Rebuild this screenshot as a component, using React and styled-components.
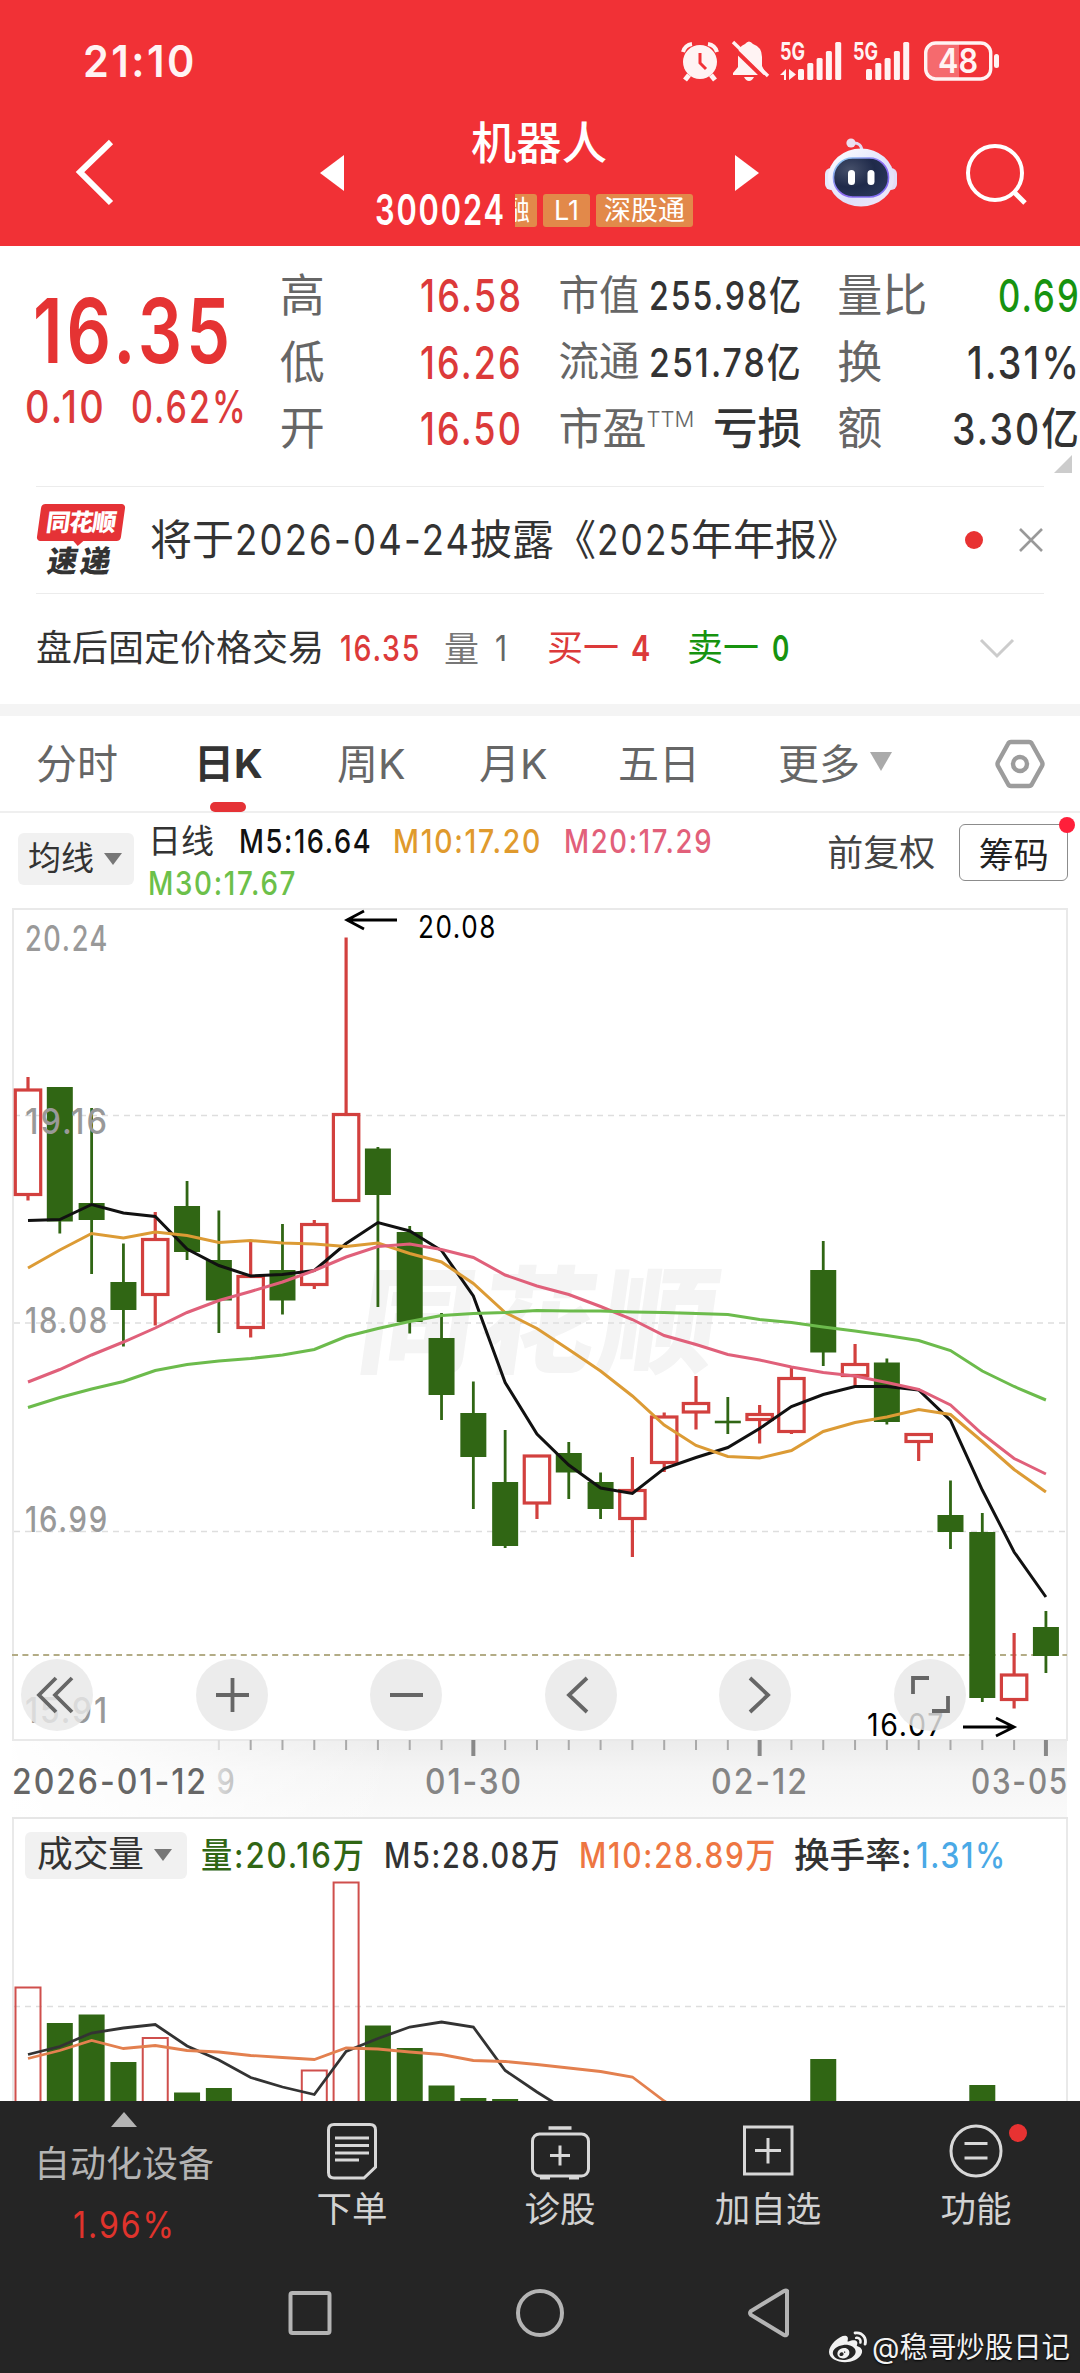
import React, { useLayoutEffect, useRef, useState } from "react";
import styled, { createGlobalStyle } from "styled-components";
import { FaWeibo } from "react-icons/fa";

const GlobalStyle = createGlobalStyle`
  * { box-sizing: border-box; }
  body {
    margin: 0;
    background: #fff;
    font-family: Inter, "Noto Sans CJK SC", sans-serif;
    color: #333;
  }
  svg { display: block; flex: none; overflow: visible; }
`;

const RED = "#dc3a3a";
const GREEN = "#306614";

/* ---------- text squeezed to a fixed width ---------- */

const FitBox = styled.span`
  display: block;
  flex: none;
  width: ${p => p.$w}px;
  margin-left: ${p => p.$left || 0}px;
  font-size: ${p => p.$size}px;
  font-weight: ${p => p.$weight || 400};
  color: ${p => p.$color || "inherit"};
  line-height: 1.2;
  white-space: nowrap;
`;

const FitInner = styled.span`
  display: inline-block;
  transform-origin: left center;
  letter-spacing: ${p => (p.$num ? "0.06em" : 0)};
  margin-left: ${p => (p.$num ? "0.02em" : 0)};
`;

function Fit({ w, size, weight, color, left, children }) {
  const ref = useRef(null);
  const [scale, setScale] = useState(1);

  useLayoutEffect(() => {
    setScale(w / ref.current.offsetWidth);
  }, [w]);

  return (
    <FitBox $w={w} $size={size} $weight={weight} $color={color} $left={left}>
      <FitInner ref={ref} $num={/\d/.test(children)} style={{ transform: `scaleX(${scale})` }}>
        {children}
      </FitInner>
    </FitBox>
  );
}

/* ---------- layout ---------- */

const Page = styled.div`
  position: relative;
  width: 1080px;
  height: 2373px;
  overflow: hidden;
  background: #fff;
`;

const Header = styled.header`
  height: 246px;
  background: #f13136;
  color: #fff;
`;

const StatusBar = styled.div`
  display: flex;
  align-items: center;
  height: 100px;
  padding: 22px 80px 0 82px;
`;

const StatusIcons = styled.div`
  display: flex;
  align-items: center;
  margin-left: auto;
`;

const NavRow = styled.div`
  display: flex;
  align-items: center;
  height: 146px;
  padding-left: 75px;
`;

const TitleBlock = styled.div`
  width: 391px;
  height: 146px;
  padding-top: 20px;
`;

const TitleLine = styled.div`
  display: flex;
  align-items: center;
  height: 48px;
  padding-left: 127px;
`;

const CodeLine = styled.div`
  display: flex;
  align-items: center;
  height: 40px;
  margin-top: 22px;
  padding-left: 30px;
`;

const Tag = styled.span`
  display: flex;
  justify-content: ${p => (p.$clip ? "flex-end" : "center")};
  align-items: center;
  width: ${p => p.$w}px;
  height: 33px;
  margin-left: ${p => p.$left}px;
  padding-right: ${p => (p.$clip ? 7 : 0)}px;
  border-radius: ${p => (p.$clip ? "0 3px 3px 0" : "3px")};
  background: #e2894a;
  font-size: 27px;
  line-height: 33px;
  white-space: nowrap;
  overflow: hidden;
`;

const Gap = styled.span`
  flex: none;
  width: ${p => p.$w}px;
`;

const Quote = styled.section`
  position: relative;
  display: flex;
  height: 240px;
  padding-top: 17px;
`;

const PriceBlock = styled.div`
  width: 280px;
  padding-top: 15px;
`;

const PriceSub = styled.div`
  display: flex;
  margin-top: -5px;
`;

const StatCol = styled.div`
  width: ${p => p.$w}px;
  margin-right: ${p => p.$gap || 0}px;
`;

const Stat = styled.div`
  display: flex;
  align-items: center;
  justify-content: space-between;
  height: 66.5px;
`;

const Name = styled.span`
  display: flex;
  font-size: ${p => p.$size || 45}px;
  line-height: 1.2;
  color: #666;
`;

const Sup = styled.span`
  margin-top: 5px;
  font-size: 22px;
  font-weight: 300;
  line-height: 1;
`;

const Corner = styled.span`
  position: absolute;
  right: 8px;
  bottom: 13px;
  border-left: 18px solid transparent;
  border-bottom: 18px solid #ccc;
`;

const News = styled.section`
  display: flex;
  align-items: center;
  height: 108px;
  margin: 0 36px;
  border-top: 1px solid #ececec;
  border-bottom: 1px solid #ececec;
`;

const Brand = styled.div`
  width: 84px;
  margin: 0 27px 0 3px;
  font-weight: 900;
  line-height: 1;
`;

const BrandTop = styled.div`
  position: relative;
  height: 37px;
  transform: skewX(-8deg);
  border-radius: 4px;
  background: #e53236;
  color: #fff;
  font-size: 24px;
  line-height: 37px;
  text-align: center;
  letter-spacing: -1px;
  &:after {
    content: "";
    position: absolute;
    left: 36px;
    top: 36px;
    border: 6px solid transparent;
    border-top-color: #e53236;
    border-bottom: 0;
  }
`;

const BrandBottom = styled.div`
  margin-top: 4px;
  height: 32px;
  transform: skewX(-10deg);
  font-size: 30px;
  line-height: 32px;
  text-align: center;
  letter-spacing: 3px;
`;

const Dot = styled.span`
  flex: none;
  width: ${p => p.$d}px;
  height: ${p => p.$d}px;
  border-radius: 50%;
  background: ${p => p.$color || "#e83232"};
`;

const AfterHours = styled.section`
  display: flex;
  align-items: center;
  height: 110px;
  padding-left: 36px;
`;

const Band = styled.div`
  height: 12px;
  background: #f4f4f4;
`;

const Tabs = styled.nav`
  display: flex;
  height: 97px;
  padding-left: 36px;
  border-bottom: 2px solid #efefef;
`;

const Tab = styled.div`
  position: relative;
  display: flex;
  align-items: center;
  width: ${p => p.$w}px;
  height: 97px;
  padding-bottom: ${p => (p.$icon ? 2 : 7)}px;
  font-size: ${p => (p.$on ? 40 : 41)}px;
  font-weight: ${p => (p.$on ? 700 : 400)};
  color: ${p => (p.$on ? "#333" : "#666")};
  &:after {
    content: "";
    display: ${p => (p.$on ? "block" : "none")};
    position: absolute;
    left: 16px;
    bottom: 1px;
    width: 36px;
    height: 10px;
    border-radius: 5px;
    background: #e53236;
  }
`;

const Caret = styled.span`
  margin-left: ${p => p.$left || 0}px;
  border: ${p => p.$s}px solid transparent;
  border-top: ${p => p.$h}px solid ${p => p.$color || "#777"};
  border-bottom: 0;
`;

const Legend = styled.div`
  display: flex;
  height: 95px;
  padding: 0 12px 0 18px;
`;

const Pill = styled.div`
  display: flex;
  align-items: center;
  flex: none;
  width: ${p => p.$w}px;
  height: ${p => p.$h}px;
  margin-top: ${p => p.$top || 0}px;
  padding-left: ${p => p.$pad}px;
  border-radius: 6px;
  background: #f1f1f1;
`;

const LegendLines = styled.div`
  width: 695px;
  padding-top: 8px;
`;

const LegendLine = styled.div`
  display: flex;
  align-items: center;
  height: 42px;
`;

const ChipButton = styled.div`
  position: relative;
  display: flex;
  align-items: center;
  justify-content: center;
  width: 109px;
  height: 57px;
  margin: 11px 0 0 24px;
  border: 1.5px solid #8c8c8c;
  border-radius: 6px;
  font-size: 35px;
  color: #222;
  ${Dot} {
    position: absolute;
    top: -8px;
    right: -8px;
  }
`;

const AdjustLabel = styled.span`
  padding-top: 19px;
  line-height: 42px;
  font-size: 36px;
  color: #444;
  white-space: nowrap;
`;

const ChartArea = styled.section`
  position: relative;
  height: 911px;
`;

const Controls = styled.div`
  position: absolute;
  left: 21px;
  top: 751px;
  display: flex;
  gap: 102.5px;
`;

const RoundButton = styled.span`
  display: flex;
  align-items: center;
  justify-content: center;
  width: 72px;
  height: 72px;
  border-radius: 50%;
  background: rgba(232, 232, 232, 0.82);
`;

const VolumeHead = styled.div`
  display: flex;
  align-items: center;
  height: 62px;
  margin: 0 12px;
  padding: 10px 0 0 11px;
  border: 2px solid #e9e9e9;
  border-top: 0;
  border-bottom: 0;
`;

const Bottom = styled.footer`
  height: 272px;
  background: #252525;
`;

const BottomMenu = styled.div`
  display: flex;
  height: 152px;
`;

const Sector = styled.div`
  display: flex;
  flex-direction: column;
  align-items: center;
  width: 248px;
  padding-top: 11px;
  color: #b4b4b4;
`;

const Up = styled.span`
  border: 13px solid transparent;
  border-bottom: 15px solid #b4b4b4;
  border-top: 0;
`;

const SectorName = styled.span`
  margin: 15px 0 17px;
  font-size: 36px;
  line-height: 44px;
`;

const MenuItem = styled.div`
  position: relative;
  display: flex;
  flex-direction: column;
  align-items: center;
  width: 208px;
  padding-top: 20px;
  font-size: 35.5px;
  line-height: 44px;
  color: #d2d2d2;
  svg { margin-bottom: 7px; }
  ${Dot} {
    position: absolute;
    left: 137px;
    top: 23px;
  }
`;

const SystemNav = styled.div`
  display: flex;
  align-items: center;
  justify-content: center;
  gap: 182px;
  height: 120px;
`;

const Watermark = styled.div`
  position: absolute;
  right: 10px;
  bottom: 6px;
  display: flex;
  align-items: center;
  color: #f2f2f2;
  text-shadow: 0 1px 2px #000;
`;

/* ---------- icons ---------- */

const AlarmIcon = () => (
  <svg width="38" height="40" viewBox="0 0 38 40" fill="#fff3f3">
    <circle cx="19" cy="21" r="17" />
    <path d="M2 11 Q4 4 11 3 M27 3 Q34 4 36 11" stroke="#fff3f3" strokeWidth="4" fill="none" />
    <path d="M8 34 l-4 5 M30 34 l4 5" stroke="#fff3f3" strokeWidth="5" />
    <path d="M19 12 V22 L25 28" stroke="#f13136" strokeWidth="3" fill="none" />
  </svg>
);

const BellOffIcon = () => (
  <svg width="38" height="42" viewBox="0 0 38 42" fill="#fff3f3">
    <path d="M14 4 Q18 -1 22 4 Q31 7 31 17 V26 L35 34 V35 H2 V33 L7 27 V14 Q7 7 14 4Z" />
    <path d="M13 37 H23 Q21 41 18 41 Q15 41 13 37Z" />
    <path d="M-1 5 L33 38" stroke="#f13136" strokeWidth="4" />
    <path d="M2 2 L37 36" stroke="#fff3f3" strokeWidth="3.4" />
  </svg>
);

function Signal({ first, data }) {
  const tops = [28, 22, 17, 10, 1];
  return (
    <svg width={first + 44} height="40" viewBox={`0 0 ${first + 44} 40`} fill="#fff3f3">
      <text x="0" y="19" fontSize="24" fontWeight="700" fontFamily="Inter" textLength="25" lengthAdjust="spacingAndGlyphs">5G</text>
      {tops.map((t, i) => (
        <rect key={t} x={first + i * 9.3} y={t} width="6" height={39 - t} rx="1.5" />
      ))}
      {data && <path d="M0 34 L6 28 V39 H4 V34Z M9 28 V39 L16 33.5Z" />}
    </svg>
  );
}

const Battery = () => (
  <svg width="76" height="40" viewBox="0 0 76 40">
    <path d="M3 10 Q3 3 11 3 H35 V37 H11 Q3 37 3 30Z" fill="#fff" opacity=".28" />
    <rect x="1.7" y="2" width="65" height="36" rx="10" fill="none" stroke="#fff3f3" strokeWidth="3.4" />
    <rect x="70" y="13" width="5" height="14" rx="2.5" fill="#fff3f3" />
    <text x="14" y="32" fontSize="34" fontWeight="600" fontFamily="Inter" fill="#fff3f3" textLength="40" lengthAdjust="spacingAndGlyphs">48</text>
  </svg>
);

const RobotIcon = () => (
  <svg width="74" height="70" viewBox="0 0 74 70">
    <defs>
      <linearGradient id="shell" x1="0" y1="0" x2="1" y2="1">
        <stop offset="0" stopColor="#ffffff" />
        <stop offset=".6" stopColor="#dfe0fb" />
        <stop offset="1" stopColor="#f3e9f7" />
      </linearGradient>
      <linearGradient id="rim" x1="0" y1="0" x2="1" y2="1">
        <stop offset="0" stopColor="#8fdcf2" />
        <stop offset=".5" stopColor="#8f6bf2" />
        <stop offset="1" stopColor="#7a6cf0" />
      </linearGradient>
      <radialGradient id="face" cx=".3" cy=".3" r=".9">
        <stop offset="0" stopColor="#46506a" />
        <stop offset=".5" stopColor="#1f2a4a" />
        <stop offset="1" stopColor="#2c3a5c" />
      </radialGradient>
    </defs>
    <path d="M28 5 Q38 4 38 14" fill="none" stroke="#e3daf2" strokeWidth="3" />
    <circle cx="27" cy="5" r="4.6" fill="#ecdff0" />
    <rect x="1" y="30" width="12" height="22" rx="6" fill="#e6e9fb" />
    <rect x="61" y="30" width="12" height="22" rx="6" fill="#e3dcf7" />
    <ellipse cx="37" cy="39.5" rx="33" ry="29" fill="url(#shell)" />
    <rect x="9.5" y="20" width="55" height="39" rx="19" fill="url(#face)" stroke="url(#rim)" strokeWidth="1.6" />
    <rect x="24" y="32" width="7" height="15" rx="3.5" fill="#fff" />
    <rect x="43.500" y="32" width="7" height="15" rx="3.5" fill="#fff" />
  </svg>
);

const stroke = { fill: "none", stroke: "#d8d8d8", strokeWidth: 3 };

const OrderIcon = () => (
  <svg width="52" height="60" viewBox="0 0 52 60" {...stroke}>
    <path d="M8 3.500 H44 Q49.500 3.500 49.500 9 V46 L38 57 H8 Q2.500 57 2.500 51.500 V9 Q2.500 3.500 8 3.500Z" />
    <path d="M9 17 H43 M9 24.500 H43 M9 32 H43 M9 39 H33" />
  </svg>
);

const ToolboxIcon = () => (
  <svg width="60" height="60" viewBox="0 0 60 60" {...stroke}>
    <path d="M18.500 7 H41.500" strokeWidth="3.500" />
    <rect x="2.500" y="13" width="56" height="42" rx="7" />
    <path d="M20 34.500 H40 M30 24.500 V44.500 M10 57 H20 M39 57 H49" />
  </svg>
);

const AddIcon = () => (
  <svg width="60" height="60" viewBox="0 0 60 60" {...stroke}>
    <rect x="6.500" y="6" width="47.500" height="47" />
    <path d="M17 29.500 H43 M30 17 V42.500" />
  </svg>
);

const FunctionIcon = () => (
  <svg width="60" height="60" viewBox="0 0 60 60" {...stroke}>
    <circle cx="30" cy="30" r="25" />
    <path d="M18.500 22.500 H41.500 M18.500 37 H41.500" />
  </svg>
);

/* ---------- chart data ---------- */

const STEP = 31.81;
const cx = i => 28 + i * STEP;

// [up, high, body top, body bottom, low]
const candles = [
  [1, 1077, 1088.5, 1196, 1200.5],
  [0, 1087, 1087, 1221.5, 1233.5],
  [0, 1108, 1203, 1220, 1274],
  [0, 1243.5, 1282, 1310, 1346.5],
  [1, 1212, 1238, 1296, 1325.5],
  [0, 1181, 1206, 1252, 1260],
  [0, 1210.5, 1260, 1300.5, 1333],
  [1, 1240.5, 1275, 1329, 1337.5],
  [0, 1224, 1270, 1300.5, 1314.5],
  [1, 1220, 1223, 1286, 1289],
  [1, 937.5, 1113, 1202, 1202],
  [0, 1147, 1148.5, 1195, 1307],
  [0, 1226, 1232, 1322, 1333.5],
  [0, 1313, 1338, 1395, 1420],
  [0, 1381.5, 1413, 1457, 1509],
  [0, 1430, 1482, 1546, 1548],
  [1, 1454.5, 1454.5, 1504.5, 1519],
  [0, 1442, 1453, 1472.5, 1499],
  [0, 1472.5, 1482, 1509, 1519],
  [1, 1457, 1489, 1520, 1557],
  [1, 1412.5, 1415.5, 1464, 1472],
  [1, 1376, 1402, 1413.5, 1429.5],
  [0, 1397, 1420.7, 1423.3, 1434],
  [1, 1405, 1413, 1421, 1443.5],
  [1, 1367, 1377, 1433, 1434],
  [0, 1241, 1270, 1352.5, 1366],
  [1, 1344, 1363, 1377, 1388],
  [0, 1358.5, 1362.5, 1422, 1424.5],
  [1, 1433, 1433, 1443, 1461],
  [0, 1480.5, 1515, 1532, 1549],
  [0, 1513, 1532, 1698, 1702],
  [1, 1633, 1673.5, 1701, 1708.5],
  [0, 1611, 1627, 1656, 1673]
];

const averages = [
  {
    color: "#111",
    ys: [1220.5, 1219.5, 1204.5, 1213, 1216.5, 1249, 1265.5, 1276, 1274.5, 1270.5, 1243.5, 1222.5, 1231, 1250.5, 1296, 1382.5, 1434, 1465, 1488, 1493.5, 1468.5, 1457.5, 1447.5, 1428.5, 1406.5, 1394.5, 1386.5, 1386.5, 1390, 1420.5, 1490, 1552, 1597]
  },
  {
    color: "#dc9b35",
    ys: [1268, 1250, 1233.5, 1238, 1232, 1235.5, 1242.5, 1240.5, 1243, 1244, 1246.5, 1243, 1253.5, 1262, 1283.5, 1312.5, 1328.5, 1349.5, 1371, 1396, 1425, 1445.5, 1456.5, 1458, 1450.5, 1431.5, 1422.5, 1417, 1409.5, 1414.5, 1441.5, 1469.5, 1492]
  },
  {
    color: "#e0607a",
    ys: [1382, 1369.5, 1355, 1342, 1328, 1312.5, 1300.5, 1291.5, 1282, 1270.5, 1257, 1246.5, 1244, 1249.5, 1257.5, 1275, 1286, 1294.5, 1306.5, 1319.5, 1335.5, 1344.5, 1354.5, 1360, 1367, 1372.5, 1376, 1382.5, 1389.5, 1405, 1434, 1458.5, 1474]
  },
  {
    color: "#6cbb4c",
    ys: [1407.5, 1397.5, 1389, 1381.5, 1370.5, 1364.5, 1361, 1358.5, 1355, 1349.5, 1336.5, 1328.5, 1321.5, 1315.5, 1313.5, 1312.5, 1310.5, 1311, 1311, 1312, 1312.5, 1313.5, 1314.5, 1319.5, 1322.5, 1327, 1331, 1335.5, 1340.5, 1350.5, 1371, 1386.5, 1400]
  }
];

const priceLabels = [
  ["20.24", 951],
  ["19.16", 1133.5],
  ["18.08", 1332.5],
  ["16.99", 1532],
  ["15.91", 1723]
];

// [index, up, top]
const volumes = [
  [0, 1, 1986.5], [1, 0, 2023], [2, 0, 2014.5], [3, 0, 2062], [4, 1, 2037],
  [5, 0, 2092.5], [6, 0, 2088], [9, 1, 2069.5], [10, 1, 1881.5], [11, 0, 2025.5],
  [12, 0, 2048], [13, 0, 2085.5], [14, 0, 2098], [15, 0, 2099], [25, 0, 2059], [30, 0, 2085]
];

const volumeM5 = [2054.5, 2046.5, 2033, 2028, 2024.5, 2046, 2060, 2077.5, 2087, 2094.5, 2051.5, 2038.5, 2027, 2022, 2027, 2070.5, 2092, 2112];
const volumeM10 = [2058.5, 2050.5, 2040.5, 2048.5, 2045.5, 2050.5, 2052, 2055.5, 2057.5, 2059.5, 2048, 2049, 2052, 2054.5, 2060.5, 2061.5, 2064.5, 2068, 2071.5, 2077, 2101, 2120];

const points = ys => ys.map((y, i) => `${cx(i)},${y}`).join(" ");

function ChartText({ x, y, w, size, fill, weight, children }) {
  return (
    <text
      x={x}
      y={y}
      fontSize={size}
      fill={fill}
      fontWeight={weight || 400}
      fontFamily="Inter"
      letterSpacing={size * 0.06}
      textLength={w}
      lengthAdjust="spacingAndGlyphs"
    >
      {children}
    </text>
  );
}

function Candle({ i, data }) {
  const [up, high, top, bottom, low] = data;
  const x = cx(i);
  if (up) {
    return (
      <g stroke="#d2403e" strokeWidth="3.200" fill="none">
        {high < top && <path d={`M${x} ${high} V${top + 1}`} />}
        {low > bottom && <path d={`M${x} ${bottom - 1} V${low}`} />}
        <rect x={x - 12.7} y={top + 1.5} width="25.4" height={bottom - top - 3} />
      </g>
    );
  }
  return (
    <g fill={GREEN}>
      <rect x={x - 1.4} y={high} width="2.8" height={low - high} />
      <rect x={x - 13} y={top} width="26" height={bottom - top} />
    </g>
  );
}

function PriceChart() {
  return (
    <svg width="1080" height="911" viewBox="0 908 1080 911">
      <defs>
        <linearGradient id="axisBg" x1="0" y1="0" x2="0" y2="1">
          <stop offset="0" stopColor="#ececec" />
          <stop offset=".4" stopColor="#f5f5f5" />
          <stop offset="1" stopColor="#fafafa" />
        </linearGradient>
        <linearGradient id="axisFade" x1="0" y1="0" x2="1" y2="0">
          <stop offset="0" stopColor="#fff" />
          <stop offset=".25" stopColor="#fff" stopOpacity=".8" />
          <stop offset="1" stopColor="#fff" stopOpacity="0" />
        </linearGradient>
        <linearGradient id="dateFade" gradientUnits="userSpaceOnUse" x1="200" y1="0" x2="250" y2="0">
          <stop offset="0" stopColor="#999" stopOpacity="0.08" />
          <stop offset="1" stopColor="#999" stopOpacity=".8" />
        </linearGradient>
      </defs>

      <rect x="13" y="909" width="1054" height="831" fill="none" stroke="#e9e9e9" strokeWidth="2" />
      <g transform="translate(354 1364) skewX(-8)">
        <text fontSize="116" fontWeight="900" fill="#f4f4f4" fontFamily="Noto Sans CJK SC" textLength="358">同花顺</text>
      </g>
      {[1115.5, 1323, 1531.5].map(y => (
        <path key={y} d={`M14 ${y} H1067`} stroke="#dedede" strokeWidth="1.3" strokeDasharray="6 5" />
      ))}
      <path d="M12 1655 H1067" stroke="#b3ac86" strokeWidth="2" strokeDasharray="6 4.400" />

      {candles.map((c, i) => (
        <Candle key={i} i={i} data={c} />
      ))}
      {averages.map(a => (
        <polyline key={a.color} points={points(a.ys)} fill="none" stroke={a.color} strokeWidth="3" />
      ))}

      {priceLabels.map(([t, y]) => (
        <ChartText key={t} x={25} y={y} w={84} size={35} weight={500} fill="#999">{t}</ChartText>
      ))}

      <path d="M397 920 H347 M364 911 L347 920 L364 929" stroke="#000" strokeWidth="2.800" fill="none" />
      <ChartText x={418} y={938} w={79} size={31} fill="#000">20.08</ChartText>
      <path d="M963 1727 H1013 M996 1718 L1014 1727 L996 1736" stroke="#000" strokeWidth="2.800" fill="none" />
      <ChartText x={867} y={1736} w={78} size={31} fill="#000">16.07</ChartText>

      <rect x="12" y="1741" width="1055" height="78" fill="url(#axisBg)" />
      <rect x="0" y="1741" width="400" height="78" fill="url(#axisFade)" />
      <path d="M12 1818 H1068" stroke="#e6e6e6" strokeWidth="2" />
      {candles.map((c, i) => {
        if (i < 6) return null;
        const major = i === 14 || i === 23 || i === 32;
        return (
          <rect
            key={i}
            x={cx(i) - (major ? 2 : 1)}
            y="1740"
            width={major ? 4 : 2}
            height={major ? 16 : 10}
            fill={major ? "#888" : i === 6 ? "#ddd" : "#aaa"}
          />
        );
      })}
      <ChartText x={12} y={1793.5} w={196} size={35} weight={500} fill="#666">2026-01-12</ChartText>
      <ChartText x={216.500} y={1793.5} w={20} size={35} weight={500} fill="url(#dateFade)">9</ChartText>
      <ChartText x={425} y={1793.5} w={98} size={35} weight={500} fill="#858585">01-30</ChartText>
      <ChartText x={711} y={1793.5} w={98} size={35} weight={500} fill="#858585">02-12</ChartText>
      <ChartText x={971} y={1793.5} w={98} size={35} weight={500} fill="#858585">03-05</ChartText>
    </svg>
  );
}

const VolumeSvg = styled.svg`
  && { overflow: hidden; }
`;

function VolumeChart() {
  return (
    <VolumeSvg width="1080" height="220" viewBox="0 1881 1080 220">
      <path d="M13 1881 V2101 M1067 1881 V2101" stroke="#e9e9e9" strokeWidth="2" />
      <path d="M14 2006.500 H1067" stroke="#dedede" strokeWidth="1.300" strokeDasharray="6 5" />
      {volumes.map(([i, up, top]) =>
        up ? (
          <rect key={i} x={cx(i) - 12.5} y={top + 1} width="25" height="240" fill="none" stroke="#cf4f4c" strokeWidth="2" />
        ) : (
          <rect key={i} x={cx(i) - 13} y={top} width="26" height="240" fill={GREEN} />
        )
      )}
      <polyline points={points(volumeM5)} fill="none" stroke="#333" strokeWidth="2.800" />
      <polyline points={points(volumeM10)} fill="none" stroke="#e3804f" strokeWidth="2.800" />
    </VolumeSvg>
  );
}

const controlPaths = [
  "M30 14 L13 31 L30 48 M46 14 L29 31 L46 48",
  "M15 31 H48 M31.500 14 V48",
  "M15 31 H48",
  "M37 14 L19 31 L37 48",
  "M26 14 L44 31 L26 48",
  "M30 14 H14 V30 M49 32 V47 H33"
];

/* ---------- sections ---------- */

function TopHeader() {
  return (
    <Header>
      <StatusBar>
        <Fit w={114} size={44} weight={600} color="#fff3f3">21:10</Fit>
        <StatusIcons>
          <AlarmIcon />
          <Gap $w={12} />
          <BellOffIcon />
          <Gap $w={11} />
          <Signal first={18} data />
          <Gap $w={11} />
          <Signal first={13} />
          <Gap $w={14} />
          <Battery />
        </StatusIcons>
      </StatusBar>
      <NavRow>
        <svg width="40" height="70" viewBox="0 0 40 70">
          <path d="M36 4 L5 34 L36 65" fill="none" stroke="#fff" strokeWidth="6" />
        </svg>
        <Gap $w={205} />
        <svg width="24" height="36" viewBox="0 0 24 36">
          <path d="M24 0 V36 L0 18Z" fill="#fff" />
        </svg>
        <TitleBlock>
          <TitleLine>
            <Fit w={136} size={45} weight={500}>机器人</Fit>
          </TitleLine>
          <CodeLine>
            <Fit w={131} size={43} weight={600}>300024</Fit>
            <Tag $w={22} $left={10} $clip>融</Tag>
            <Tag $w={47} $left={6}>L1</Tag>
            <Tag $w={97} $left={6}>深股通</Tag>
          </CodeLine>
        </TitleBlock>
        <svg width="24" height="36" viewBox="0 0 24 36">
          <path d="M0 0 V36 L24 18Z" fill="#fff" />
        </svg>
        <Gap $w={65} />
        <RobotIcon />
        <Gap $w={66} />
        <svg width="66" height="66" viewBox="0 0 66 66" fill="none" stroke="#fff" strokeWidth="4">
          <circle cx="31" cy="33" r="27" />
          <path d="M50 52 L61 63" strokeWidth="5" />
        </svg>
      </NavRow>
    </Header>
  );
}

function QuotePanel() {
  return (
    <Quote>
      <PriceBlock>
        <Fit w={201} left={31} size={89} weight={600} color="#e53333">16.35</Fit>
        <PriceSub>
          <Fit w={81} left={24} size={45} weight={500} color={RED}>0.10</Fit>
          <Fit w={117} left={25} size={45} weight={500} color={RED}>0.62%</Fit>
        </PriceSub>
      </PriceBlock>
      <StatCol $w={243} $gap={36}>
        <Stat>
          <Name>高</Name>
          <Fit w={103} size={45} weight={500} color={RED}>16.58</Fit>
        </Stat>
        <Stat>
          <Name>低</Name>
          <Fit w={103} size={45} weight={500} color={RED}>16.26</Fit>
        </Stat>
        <Stat>
          <Name>开</Name>
          <Fit w={103} size={45} weight={500} color={RED}>16.50</Fit>
        </Stat>
      </StatCol>
      <StatCol $w={244} $gap={35}>
        <Stat>
          <Name $size={40.5}>市值</Name>
          <Fit w={154} size={40} weight={500}>255.98亿</Fit>
        </Stat>
        <Stat>
          <Name $size={40.5}>流通</Name>
          <Fit w={154} size={40} weight={500}>251.78亿</Fit>
        </Stat>
        <Stat>
          <Name $size={44}>市盈<Sup>TTM</Sup></Name>
          <Fit w={89} size={43} weight={500}>亏损</Fit>
        </Stat>
      </StatCol>
      <StatCol $w={243}>
        <Stat>
          <Name>量比</Name>
          <Fit w={83} size={45} weight={500} color="#17930f">0.69</Fit>
        </Stat>
        <Stat>
          <Name>换</Name>
          <Fit w={114} size={45} weight={500}>1.31%</Fit>
        </Stat>
        <Stat>
          <Name>额</Name>
          <Fit w={129} size={44} weight={500}>3.30亿</Fit>
        </Stat>
      </StatCol>
      <Corner />
    </Quote>
  );
}

function NewsRow() {
  return (
    <News>
      <Brand>
        <BrandTop>同花顺</BrandTop>
        <BrandBottom>速递</BrandBottom>
      </Brand>
      <Fit w={84} size={42}>将于</Fit>
      <Fit w={236} size={43}>2026-04-24</Fit>
      <Fit w={126} size={42}>披露《</Fit>
      <Fit w={95} size={43}>2025</Fit>
      <Fit w={168} size={42}>年年报》</Fit>
      <Gap $w={106} />
      <Dot $d={18} />
      <Gap $w={36} />
      <svg width="24" height="24" viewBox="0 0 24 24">
        <path d="M1 1 L23 23 M23 1 L1 23" stroke="#999" strokeWidth="2.600" />
      </svg>
    </News>
  );
}

function AfterHoursRow() {
  return (
    <AfterHours>
      <Fit w={288} size={36}>盘后固定价格交易</Fit>
      <Fit w={81} left={15} size={36} weight={500} color={RED}>16.35</Fit>
      <Fit w={35} left={24} size={35} color="#777">量</Fit>
      <Fit w={14} left={15} size={36} color="#666">1</Fit>
      <Fit w={72} left={39} size={36} color={RED}>买一</Fit>
      <Fit w={21} left={11} size={36} weight={600} color={RED}>4</Fit>
      <Fit w={72} left={36} size={36} color="#17930f">卖一</Fit>
      <Fit w={19} left={12} size={36} weight={600} color="#17930f">0</Fit>
      <Gap $w={189} />
      <svg width="36" height="22" viewBox="0 0 36 22">
        <path d="M2 2 L18 18 L34 2" fill="none" stroke="#ccc" strokeWidth="3" />
      </svg>
    </AfterHours>
  );
}

function ChartTabs() {
  return (
    <Tabs>
      <Tab $w={158}>分时</Tab>
      <Tab $w={143} $on>日K</Tab>
      <Tab $w={142}>周K</Tab>
      <Tab $w={139}>月K</Tab>
      <Tab $w={160}>五日</Tab>
      <Tab $w={217}>
        更多
        <Caret $left={10} $s={11} $h={19} $color="#aaa" />
      </Tab>
      <Tab $w={60} $icon>
        <svg width="50" height="50" viewBox="0 0 50 50" fill="none" stroke="#9c9c9c" strokeWidth="4.400">
          <path d="M16 3 H34 Q36 3 37 5 L47 23 Q48 25 47 27 L37 45 Q36 47 34 47 H16 Q14 47 13 45 L3 27 Q2 25 3 23 L13 5 Q14 3 16 3Z" />
          <circle cx="25" cy="25" r="7" />
        </svg>
      </Tab>
    </Tabs>
  );
}

function ChartLegend() {
  return (
    <Legend>
      <Pill $w={116} $h={52} $top={20} $pad={10}>
        <Fit w={66} size={33}>均线</Fit>
        <Caret $left={10} $s={9} $h={12} />
      </Pill>
      <LegendLines>
        <LegendLine>
          <Fit w={66} left={14} size={33}>日线</Fit>
          <Fit w={133} left={24} size={33} weight={500} color="#111">M5:16.64</Fit>
          <Fit w={149} left={21} size={33} weight={500} color="#e09a2d">M10:17.20</Fit>
          <Fit w={149} left={22} size={33} weight={500} color="#e2607a">M20:17.29</Fit>
        </LegendLine>
        <LegendLine>
          <Fit w={149} left={13} size={33} weight={500} color="#6cc04a">M30:17.67</Fit>
        </LegendLine>
      </LegendLines>
      <AdjustLabel>前复权</AdjustLabel>
      <ChipButton>
        筹码
        <Dot $d={16} $color="#ff1f3a" />
      </ChipButton>
    </Legend>
  );
}

function VolumePanel() {
  return (
    <section>
      <VolumeHead>
        <Pill $w={162} $h={47} $pad={12}>
          <Fit w={107} size={36}>成交量</Fit>
          <Caret $left={10} $s={9} $h={12} />
        </Pill>
        <Fit w={165} left={13} size={35} weight={500} color={GREEN}>量:20.16万</Fit>
        <Fit w={177} left={18} size={35} weight={500}>M5:28.08万</Fit>
        <Fit w={198} left={18} size={35} weight={500} color="#ee7642">M10:28.89万</Fit>
        <Fit w={118} left={18} size={35} weight={500}>换手率:</Fit>
        <Fit w={91} left={3} size={35} weight={500} color="#4aa9e6">1.31%</Fit>
      </VolumeHead>
      <VolumeChart />
    </section>
  );
}

function BottomBar() {
  return (
    <Bottom>
      <BottomMenu>
        <Sector>
          <Up />
          <SectorName>自动化设备</SectorName>
          <Fit w={103} size={37} color="#e0332c">1.96%</Fit>
        </Sector>
        <MenuItem>
          <OrderIcon />
          下单
        </MenuItem>
        <MenuItem>
          <ToolboxIcon />
          诊股
        </MenuItem>
        <MenuItem>
          <AddIcon />
          加自选
        </MenuItem>
        <MenuItem>
          <FunctionIcon />
          <Dot $d={18} />
          功能
        </MenuItem>
      </BottomMenu>
      <SystemNav>
        <svg width="48" height="50" viewBox="0 0 48 50" fill="none" stroke="#b4b4b4" strokeWidth="4">
          <rect x="4.500" y="5" width="39" height="40" rx="2" />
        </svg>
        <svg width="48" height="50" viewBox="0 0 48 50" fill="none" stroke="#b4b4b4" strokeWidth="4">
          <circle cx="24" cy="25" r="22" />
        </svg>
        <svg width="48" height="50" viewBox="0 0 48 50" fill="none" stroke="#b4b4b4" strokeWidth="4">
          <path d="M41 3 V46 Q40 48 38 47 L5 27 Q3 25 5 23 L38 3 Q40 2 41 3Z" />
        </svg>
      </SystemNav>
    </Bottom>
  );
}

export default function App() {
  return (
    <Page>
      <GlobalStyle />
      <TopHeader />
      <QuotePanel />
      <NewsRow />
      <AfterHoursRow />
      <Band />
      <ChartTabs />
      <ChartLegend />
      <ChartArea>
        <PriceChart />
        <Controls>
          {controlPaths.map(d => (
            <RoundButton key={d}>
              <svg width="62" height="62" viewBox="0 0 62 62">
                <path d={d} fill="none" stroke="#666" strokeWidth="3.800" />
              </svg>
            </RoundButton>
          ))}
        </Controls>
      </ChartArea>
      <VolumePanel />
      <BottomBar />
      <Watermark>
        <FaWeibo size={38} />
        <Fit w={198} left={5} size={29}>@稳哥炒股日记</Fit>
      </Watermark>
    </Page>
  );
}
